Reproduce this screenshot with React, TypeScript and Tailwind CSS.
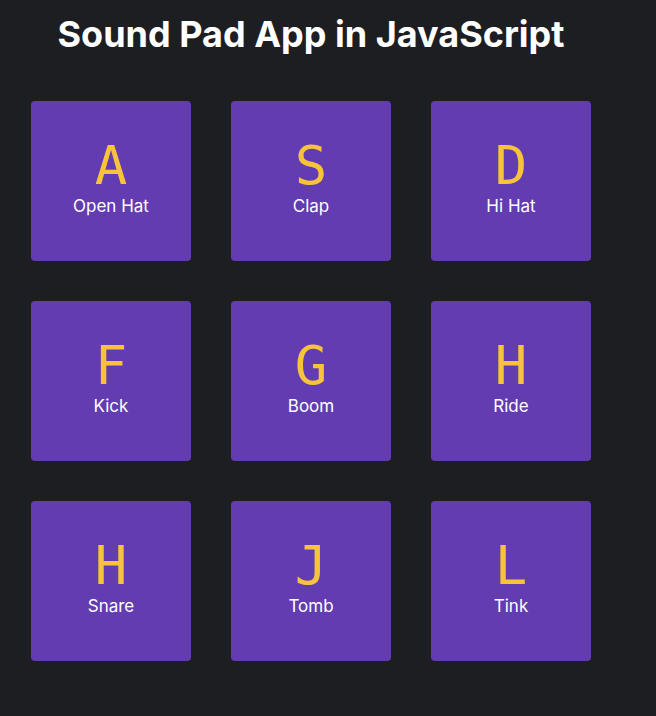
import React from "react";

const pads = [
  { key: "A", name: "Open Hat" },
  { key: "S", name: "Clap" },
  { key: "D", name: "Hi Hat" },
  { key: "F", name: "Kick" },
  { key: "G", name: "Boom" },
  { key: "H", name: "Ride" },
  { key: "H", name: "Snare" },
  { key: "J", name: "Tomb" },
  { key: "L", name: "Tink" },
];

export default function App() {
  return (
    <div className="min-h-[716px] w-full bg-[#1d1e22] pt-[12px]">
      <div className="ml-[31px] w-[560px]">
        <h1 className="text-center text-[36px] font-bold leading-[44px] text-white [font-family:Inter,'Noto_Sans',sans-serif]">
          Sound Pad App in JavaScript
        </h1>
        <div className="mt-[45px] grid grid-cols-[repeat(3,160px)] gap-[40px]">
          {pads.map((p, i) => (
            <div
              key={i}
              className="flex h-[160px] w-[160px] flex-col items-center justify-center rounded-[4px] bg-[#623cb0]"
            >
              <div className="-mt-[7px] text-[54px] leading-[54px] text-[#f6c33a] [font-family:'DejaVu_Sans_Mono',monospace]">
                {p.key}
              </div>
              <div className="mt-[2px] text-[17px] leading-[22px] text-white [font-family:Inter,sans-serif]">
                {p.name}
              </div>
            </div>
          ))}
        </div>
      </div>
    </div>
  );
}
